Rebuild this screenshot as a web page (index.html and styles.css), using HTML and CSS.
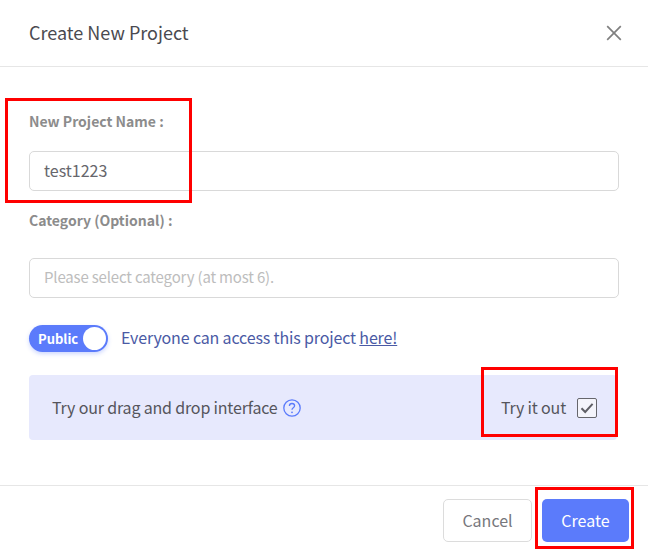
FILE: index.html
```html
<!DOCTYPE html>
<html lang="en">
<head>
<meta charset="utf-8">
<title>Create New Project</title>
<link rel="stylesheet" href="styles.css">
</head>
<body>
<div class="modal">
  <header class="modal-header">
    <h1 class="modal-title">Create New Project</h1>
    <svg class="close-icon" width="16" height="16" viewBox="0 0 16 16" aria-label="Close"><path d="M1.2 1.2 14.8 14.8M14.8 1.2 1.2 14.8" fill="none" stroke="#808080" stroke-width="1.7"/></svg>
  </header>
  <main class="modal-body">
    <label class="field-label label-name">New Project Name :</label>
    <div class="input input-value">test1223</div>
    <label class="field-label label-category">Category (Optional) :</label>
    <div class="input input-placeholder">Please select category (at most 6).</div>
    <div class="visibility">
      <div class="toggle"><span class="toggle-text">Public</span><span class="toggle-knob"></span></div>
      <span class="visibility-text">Everyone can access this project <a class="visibility-link" href="#">here!</a></span>
    </div>
    <div class="banner">
      <div class="banner-left">
        <span class="banner-text">Try our drag and drop interface</span>
        <svg class="help-icon" width="18" height="18" viewBox="0 0 18 18"><circle cx="9" cy="9" r="8.2" fill="none" stroke="#5b7bfb" stroke-width="1.3"/><path d="M6.4 7c0-1.5 1.2-2.5 2.6-2.5s2.6 1 2.6 2.3c0 2-2.6 1.9-2.6 3.9" fill="none" stroke="#5b7bfb" stroke-width="1.3"/><circle cx="9" cy="13.3" r=".9" fill="#5b7bfb"/></svg>
      </div>
      <div class="banner-right">
        <span class="banner-text">Try it out</span>
        <span class="checkbox"><svg width="14" height="12" viewBox="0 0 14 12"><path d="M1.5 6.2 5.2 10 12.6 1.8" fill="none" stroke="#5f5f66" stroke-width="2"/></svg></span>
      </div>
    </div>
  </main>
  <footer class="modal-footer">
    <button class="btn btn-cancel">Cancel</button>
    <button class="btn btn-create">Create</button>
  </footer>
</div>
<div class="mark mark-name"></div>
<div class="mark mark-try"></div>
<div class="mark mark-create"></div>
</body>
</html>
```
FILE: styles.css
```css
* { box-sizing: border-box; }
html, body { margin: 0; height: 552px; overflow: hidden; background: #fff; }
body { position: relative; font-family: "Noto Sans CJK SC", "Noto Sans", sans-serif; color: #55555c; }
.modal { width: 648px; height: 552px; display: flex; flex-direction: column; }
.modal-header { height: 67px; border-bottom: 1px solid #e6e6e6; padding: 0 26px 0 29px; display: flex; align-items: center; justify-content: space-between; }
.modal-title { margin: 0 0 2px; font-size: 18px; font-weight: 400; line-height: 28px; color: #4a4a50; }
.modal-body { flex: 1; padding: 0 31px 0 29px; display: flex; flex-direction: column; }
.field-label { display: block; font-size: 14px; font-weight: 700; line-height: 20px; color: #8c8c8c; }
.label-name { margin-top: 44px; }
.label-category { margin-top: 19px; }
.input { height: 40px; width: 590px; border: 1px solid #d9d9d9; border-radius: 5px; padding: 0 14px 2px; display: flex; align-items: center; line-height: 22px; }
.label-name + .input { margin-top: 20px; }
.label-category + .input { margin-top: 28px; }
.input-value { color: #66666c; font-size: 16px; }
.input-placeholder { color: #bdbdbd; font-size: 15px; letter-spacing: -.17px; }
.visibility { margin-top: 27px; display: flex; align-items: center; gap: 13px; height: 27px; }
.toggle { width: 79px; height: 27px; border-radius: 14px; background: #5b7bfb; padding: 0 2px 0 9px; display: flex; align-items: center; justify-content: space-between; box-shadow: 0 2px 4px rgba(91,123,251,.3); }
.toggle-text { color: #fff; font-size: 13px; font-weight: 700; line-height: 20px; }
.toggle-knob { width: 23px; height: 23px; border-radius: 50%; background: #fff; }
.visibility-text { font-size: 16px; line-height: 24px; color: #4a5aa5; letter-spacing: -.15px; margin-bottom: 4px; }
.visibility-link { color: #4a5aa5; text-decoration: underline; }
.banner { margin-top: 23px; height: 65px; width: 588px; background: #e7e9fd; border-radius: 4px; padding: 0 20px 0 23px; display: flex; align-items: center; justify-content: space-between; font-size: 16px; line-height: 24px; letter-spacing: -.17px; color: #55555c; }
.banner-text { margin-bottom: 2px; }
.banner-left { display: flex; align-items: center; gap: 5px; }
.banner-right { display: flex; align-items: center; gap: 11px; }
.checkbox { width: 20px; height: 20px; border: 1px solid #66666c; border-radius: 2px; background: #f4f4fb; display: flex; align-items: center; justify-content: center; }
.modal-footer { height: 67px; border-top: 1px solid #e6e6e6; padding: 13px 19px 10px 0; display: flex; justify-content: flex-end; gap: 10px; }
.btn { height: 43px; border-radius: 5px; font-family: inherit; font-size: 16px; line-height: 24px; padding: 0 0 2px; }
.btn-cancel { width: 89px; background: #fff; border: 1px solid #dcdcdc; color: #77777c; }
.btn-create { width: 87px; background: #5b7bfb; border: 0; color: #fff; }
.mark { position: absolute; border: 3px solid #ff0000; }
.mark-name { left: 5px; top: 98px; width: 187px; height: 105px; }
.mark-try { left: 481px; top: 367px; width: 137px; height: 70px; }
.mark-create { left: 535px; top: 487px; width: 99px; height: 62px; }
```
